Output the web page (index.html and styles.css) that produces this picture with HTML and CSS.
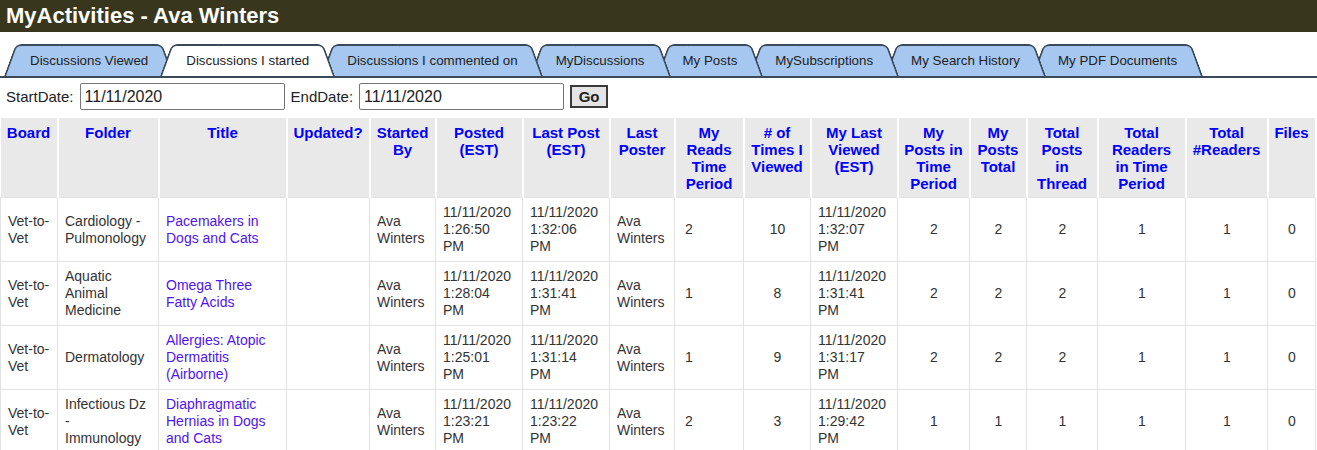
FILE: index.html
```html
<!DOCTYPE html>
<html lang="en">
<head>
    <meta charset="UTF-8">
    <title>MyActivities</title>
    <link rel="stylesheet" href="styles.css">
</head>
<body>
    <div class="topbar">MyActivities - Ava Winters</div>

    <div class="tabs">
        <a href="#" class="tab">Discussions Viewed</a>
        <a href="#" class="tab active">Discussions I started</a>
        <a href="#" class="tab">Discussions I commented on</a>
        <a href="#" class="tab">MyDiscussions</a>
        <a href="#" class="tab">My Posts</a>
        <a href="#" class="tab">MySubscriptions</a>
        <a href="#" class="tab">My Search History</a>
        <a href="#" class="tab">My PDF Documents</a>
    </div>

    <form class="dates">
        <label for="startDate">StartDate:</label>
        <input type="text" id="startDate" value="11/11/2020">
        <label for="endDate">EndDate:</label>
        <input type="text" id="endDate" value="11/11/2020">
        <button type="button" class="go-btn">Go</button>
    </form>

    <table class="activity">
        <colgroup>
            <col style="width:57px"><col style="width:101px"><col style="width:128px"><col style="width:83px">
            <col style="width:66px"><col style="width:87px"><col style="width:87px"><col style="width:65px">
            <col style="width:69px"><col style="width:67px"><col style="width:87px"><col style="width:72px">
            <col style="width:57px"><col style="width:71px"><col style="width:88px"><col style="width:82px">
            <col style="width:48px">
        </colgroup>
        <thead>
            <tr>
                <th>Board</th>
                <th>Folder</th>
                <th>Title</th>
                <th>Updated?</th>
                <th>Started<br>By</th>
                <th>Posted<br>(EST)</th>
                <th>Last Post<br>(EST)</th>
                <th>Last<br>Poster</th>
                <th>My<br>Reads<br>Time<br>Period</th>
                <th># of<br>Times I<br>Viewed</th>
                <th>My Last<br>Viewed<br>(EST)</th>
                <th>My<br>Posts in<br>Time<br>Period</th>
                <th>My<br>Posts<br>Total</th>
                <th>Total<br>Posts<br>in<br>Thread</th>
                <th>Total<br>Readers<br>in Time<br>Period</th>
                <th>Total<br>#Readers</th>
                <th>Files</th>
            </tr>
        </thead>
        <tbody>
            <tr>
                <td>Vet-to-Vet</td>
                <td class="folder">Cardiology - Pulmonology</td>
                <td><a href="#">Pacemakers in Dogs and Cats</a></td>
                <td></td>
                <td>Ava Winters</td>
                <td class="dt">11/11/2020 1:26:50 PM</td>
                <td class="dt">11/11/2020 1:32:06 PM</td>
                <td>Ava Winters</td>
                <td class="reads">2</td>
                <td class="num">10</td>
                <td class="dt">11/11/2020 1:32:07 PM</td>
                <td class="num">2</td>
                <td class="num">2</td>
                <td class="num">2</td>
                <td class="num">1</td>
                <td class="num">1</td>
                <td class="num">0</td>
            </tr>
            <tr>
                <td>Vet-to-Vet</td>
                <td class="folder">Aquatic Animal Medicine</td>
                <td><a href="#">Omega Three Fatty Acids</a></td>
                <td></td>
                <td>Ava Winters</td>
                <td class="dt">11/11/2020 1:28:04 PM</td>
                <td class="dt">11/11/2020 1:31:41 PM</td>
                <td>Ava Winters</td>
                <td class="reads">1</td>
                <td class="num">8</td>
                <td class="dt">11/11/2020 1:31:41 PM</td>
                <td class="num">2</td>
                <td class="num">2</td>
                <td class="num">2</td>
                <td class="num">1</td>
                <td class="num">1</td>
                <td class="num">0</td>
            </tr>
            <tr>
                <td>Vet-to-Vet</td>
                <td class="folder">Dermatology</td>
                <td><a href="#">Allergies: Atopic Dermatitis (Airborne)</a></td>
                <td></td>
                <td>Ava Winters</td>
                <td class="dt">11/11/2020 1:25:01 PM</td>
                <td class="dt">11/11/2020 1:31:14 PM</td>
                <td>Ava Winters</td>
                <td class="reads">1</td>
                <td class="num">9</td>
                <td class="dt">11/11/2020 1:31:17 PM</td>
                <td class="num">2</td>
                <td class="num">2</td>
                <td class="num">2</td>
                <td class="num">1</td>
                <td class="num">1</td>
                <td class="num">0</td>
            </tr>
            <tr>
                <td>Vet-to-Vet</td>
                <td class="folder">Infectious Dz - Immunology</td>
                <td><a href="#">Diaphragmatic Hernias in Dogs and Cats</a></td>
                <td></td>
                <td>Ava Winters</td>
                <td class="dt">11/11/2020 1:23:21 PM</td>
                <td class="dt">11/11/2020 1:23:22 PM</td>
                <td>Ava Winters</td>
                <td class="reads">2</td>
                <td class="num">3</td>
                <td class="dt">11/11/2020 1:29:42 PM</td>
                <td class="num">1</td>
                <td class="num">1</td>
                <td class="num">1</td>
                <td class="num">1</td>
                <td class="num">1</td>
                <td class="num">0</td>
            </tr>
        </tbody>
    </table>
</body>
</html>
```

FILE: styles.css
```css
body {
    margin: 0;
    background-color: #fff;
    font-family: "Liberation Sans", Arial, sans-serif;
    color: #333;
}
.topbar {
    background-color: #38371e;
    color: #fff;
    font-size: 22px;
    font-weight: bold;
    height: 32px;
    line-height: 32px;
    padding-left: 6px;
}
.tabs {
    display: flex;
    margin-top: 12px;
    padding-left: 4px;
    border-bottom: 2px solid #3b4a58;
}
.tab {
    position: relative;
    height: 32px;
    line-height: 33px;
    padding: 0 26px;
    margin-right: -14px;
    font-size: 13.33px;
    color: #222;
    text-decoration: none;
    white-space: nowrap;
}
.tab::before,
.tab::after {
    content: "";
    position: absolute;
    top: 0;
    bottom: 0;
    z-index: -1;
    background-color: #a5c7f0;
    border-top: 2px solid #3b4a58;
}
.tab::before {
    left: 0;
    right: 40%;
    border-left: 2px solid #3b4a58;
    border-top-left-radius: 6px;
    transform: skewX(-20deg);
    transform-origin: bottom left;
}
.tab::after {
    left: 40%;
    right: 0;
    border-right: 2px solid #3b4a58;
    border-top-right-radius: 6px;
    transform: skewX(20deg);
    transform-origin: bottom right;
}
.tab:nth-child(1) { z-index: 8; }
.tab:nth-child(2) { z-index: 7; }
.tab:nth-child(3) { z-index: 6; }
.tab:nth-child(4) { z-index: 5; }
.tab:nth-child(5) { z-index: 4; }
.tab:nth-child(6) { z-index: 3; }
.tab:nth-child(7) { z-index: 2; }
.tab:nth-child(8) { z-index: 1; }
.tab.active { z-index: 10; }
.tab.active::before,
.tab.active::after {
    background-color: #fff;
}
.dates {
    display: flex;
    align-items: center;
    padding: 5px 6px 8px;
    font-size: 15px;
    color: #222;
}
.dates label {
    margin-right: 6px;
}
.dates input {
    width: 205px;
    height: 27px;
    box-sizing: border-box;
    margin: 0 6px 0 0;
    padding: 0 4px;
    border: 1px solid #767676;
    border-radius: 2px;
    font-family: "Liberation Sans", Arial, sans-serif;
    font-size: 16px;
    color: #222;
}
.go-btn {
    width: 38px;
    height: 23px;
    padding: 0;
    background-color: #e4e4e4;
    border: 2px solid #3a3a3a;
    font-family: "Liberation Sans", Arial, sans-serif;
    font-size: 15px;
    font-weight: bold;
    color: #222;
}
.activity {
    width: 1315px;
    table-layout: fixed;
    border-collapse: collapse;
    font-size: 14px;
    line-height: 17px;
}
.activity th {
    background-color: #e9e9e9;
    color: #0000ff;
    font-size: 15px;
    font-weight: bold;
    text-align: center;
    vertical-align: top;
    padding: 6px 4px 5px;
    border-right: 2px solid #fff;
}
.activity td {
    padding: 6px 6px 6px 7px;
    border: 1px solid #e2e2e2;
    vertical-align: middle;
}
.activity td.folder {
    padding-right: 9px;
}
.activity td.dt {
    padding-right: 8px;
}
.activity td.num {
    text-align: center;
}
.activity td.reads {
    padding-left: 10px;
}
.activity a {
    color: #5014f0;
    text-decoration: none;
}
```
